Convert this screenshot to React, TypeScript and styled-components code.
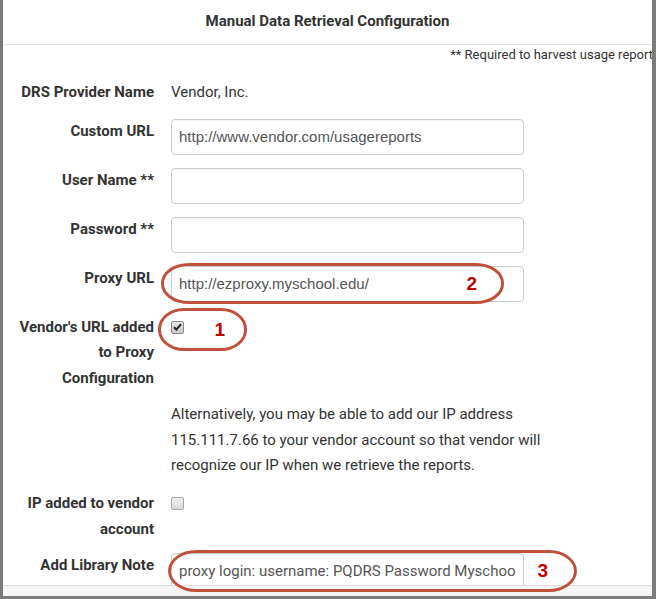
import React from "react";
import styled, { createGlobalStyle } from "styled-components";

const GlobalStyle = createGlobalStyle`
  html, body {
    margin: 0;
    padding: 0;
    background: #7b7b7b;
  }
  body {
    font-family: Roboto, "Liberation Sans", Arial, sans-serif;
    color: #333;
  }
`;

const Frame = styled.div`
  position: relative;
  width: 656px;
  height: 599px;
  box-sizing: border-box;
  border-left: 3px solid #7b7b7b;
  border-right: 4px solid #7b7b7b;
  border-bottom: 3px solid #7b7b7b;
  background: #7b7b7b;
  display: flex;
  flex-direction: column;
  overflow: hidden;
`;

const Header = styled.div`
  height: 45px;
  flex-shrink: 0;
  background: #fff;
  border-bottom: 1px solid #e5e5e5;
  display: flex;
  align-items: center;
  justify-content: center;
  font-size: 15px;
  font-weight: 700;
  color: #333;
  padding-bottom: 3px;
  box-sizing: border-box;
`;

const Body = styled.div`
  flex: 1;
  background: #fff;
  overflow: hidden;
`;

const Footer = styled.div`
  height: 10px;
  flex-shrink: 0;
  background: #f5f5f5;
  border-top: 1px solid #dcdcdc;
`;

const RequiredNote = styled.div`
  text-align: right;
  font-size: 13px;
  line-height: 15px;
  padding-top: 2px;
  margin-right: -1px;
  color: #333;
`;

const Form = styled.div`
  display: flex;
  flex-direction: column;
  padding-top: 18px;
`;

const Row = styled.div<{ $gap?: number }>`
  display: grid;
  grid-template-columns: 151px 1fr;
  column-gap: 17px;
  align-items: start;
  margin-bottom: ${(p) => (p.$gap ?? 13)}px;
`;

const Label = styled.label`
  text-align: right;
  font-size: 15px;
  font-weight: 700;
  line-height: 25.5px;
  color: #333;
`;

const Static = styled.div`
  font-size: 15px;
  line-height: 25px;
  color: #333;
`;

const Help = styled.p`
  margin: 0;
  width: 380px;
  font-size: 15px;
  line-height: 25.7px;
  color: #333;
`;

const Input = styled.div<{ $roboto?: boolean }>`
  width: 353px;
  height: 36px;
  box-sizing: border-box;
  border: 1px solid #ccc;
  border-radius: 4px;
  padding: 0 7px;
  display: flex;
  align-items: center;
  font-family: ${(p) =>
    p.$roboto ? 'Roboto, "Liberation Sans", sans-serif' : '"Liberation Sans", Arial, sans-serif'};
  font-size: 15px;
  color: #555;
  box-shadow: inset 0 1px 1px rgba(0, 0, 0, 0.04);
`;

const InputText = styled.span`
  flex: 1;
  white-space: nowrap;
  overflow: hidden;
`;

const Check = styled.span<{ $checked?: boolean }>`
  display: flex;
  align-items: center;
  justify-content: center;
  width: 13px;
  height: 13px;
  margin-top: 6px;
  box-sizing: border-box;
  border: 1px solid ${(p) => (p.$checked ? "#8a8a8a" : "#a6a6a6")};
  border-radius: 2px;
  background: ${(p) =>
    p.$checked
      ? "linear-gradient(#e6e6e6, #c9c9c9)"
      : "linear-gradient(#f0f0f0, #dadada)"};
`;

const Oval = styled.div`
  position: absolute;
  box-sizing: border-box;
  border: 3px solid #c0503a;
  display: flex;
  align-items: center;
  justify-content: flex-end;
  font-family: "Liberation Sans", Arial, sans-serif;
  font-weight: 700;
  font-size: 19px;
  color: #c00000;
  pointer-events: none;
`;

const CheckMark = () => (
  <svg width="9" height="8" viewBox="0 0 9 8">
    <path d="M1 4.2 L3.4 6.6 L8 1.2" fill="none" stroke="#222" strokeWidth="2" />
  </svg>
);

export default function App() {
  return (
    <>
      <GlobalStyle />
      <Frame>
        <Header>Manual Data Retrieval Configuration</Header>
        <Body>
          <RequiredNote>** Required to harvest usage report</RequiredNote>
          <Form>
            <Row>
              <Label>DRS Provider Name</Label>
              <Static>Vendor, Inc.</Static>
            </Row>
            <Row>
              <Label>Custom URL</Label>
              <Input>
                <InputText>http://www.vendor.com/usagereports</InputText>
              </Input>
            </Row>
            <Row>
              <Label>User Name **</Label>
              <Input />
            </Row>
            <Row>
              <Label>Password **</Label>
              <Input />
            </Row>
            <Row>
              <Label>Proxy URL</Label>
              <Input>
                <InputText>http://ezproxy.myschool.edu/</InputText>
              </Input>
            </Row>
            <Row $gap={11}>
              <Label>
                Vendor's URL added
                <br />
                to Proxy
                <br />
                Configuration
              </Label>
              <Check $checked>
                <CheckMark />
              </Check>
            </Row>
            <Row $gap={12}>
              <span />
              <Help>
                Alternatively, you may be able to add our IP address
                115.111.7.66 to your vendor account so that vendor will
                recognize our IP when we retrieve the reports.
              </Help>
            </Row>
            <Row $gap={11}>
              <Label>
                IP added to vendor
                <br />
                account
              </Label>
              <Check />
            </Row>
            <Row>
              <Label>Add Library Note</Label>
              <Input $roboto>
                <InputText>proxy login: username: PQDRS Password Myschool</InputText>
              </Input>
            </Row>
          </Form>
        </Body>
        <Footer />
        <Oval style={{ left: 158, top: 263, width: 343, height: 41, borderRadius: "28px / 20px", paddingRight: 24 }}>2</Oval>
        <Oval style={{ left: 155, top: 308, width: 89, height: 43, borderRadius: "26px / 21px", paddingRight: 19 }}>1</Oval>
        <Oval style={{ left: 165, top: 550, width: 409, height: 42, borderRadius: "28px / 21px", paddingRight: 26 }}>3</Oval>
      </Frame>
    </>
  );
}
